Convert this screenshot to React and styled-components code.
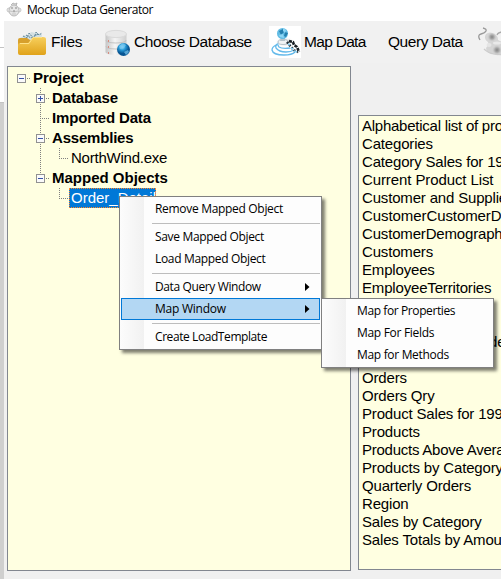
import React from 'react';
import styled, { createGlobalStyle, css } from 'styled-components';

const Global = createGlobalStyle`
  * { box-sizing: border-box; }
  html, body { margin: 0; overflow: hidden; }
  body { font-family: "Liberation Sans", Arial, sans-serif; color: #000; background: #f0f0f0; }
`;

const Screen = styled.div`
  position: relative;
  display: flex;
  width: 501px;
  height: 579px;
  overflow: hidden;
  white-space: nowrap;
`;
const Backdrop = styled.div`
  flex: 0 0 4px;
  display: flex;
  flex-direction: column;
  background: #cfcfcf;
`;
const BackdropPane = styled.div`
  height: ${(p) => p.$h}px;
  background: #fff;
  border-bottom: 1px solid #c3c3c3;
`;
const Window = styled.div`
  flex: 0 0 497px;
  display: flex;
  flex-direction: column;
  background: #f0f0f0;
`;
const TitleBar = styled.header`
  display: flex;
  align-items: center;
  flex: 0 0 21px;
  margin-left: -4px;
  padding: 0 0 2px 6px;
  gap: 5px;
  background: #fff;
  font: 12px/18px "Open Sans", sans-serif;
  letter-spacing: -0.42px;
`;
const Toolbar = styled.nav`
  display: flex;
  align-items: center;
  flex: 0 0 42px;
  padding-left: 12px;
  background: #f1f1f1;
`;
const Tool = styled.div`
  display: flex;
  align-items: center;
  flex: 0 0 ${(p) => p.$w}px;
  gap: ${(p) => p.$gap ?? 3}px;
  font-size: 15.5px;
  line-height: 20px;
  letter-spacing: ${(p) => p.$ls ?? 0}px;
  svg { flex: none; }
`;
const Body = styled.main`
  display: flex;
  align-items: flex-start;
  padding: 3px 0 0 3px;
`;
const TreePanel = styled.section`
  flex: 0 0 344px;
  height: 505px;
  padding: 1px 0 0 9px;
  border: 1px solid #828790;
  background: #ffffe1;
`;
const TreeRow = styled.div`
  display: flex;
  height: 20px;
  font-size: 15px;
  line-height: 20px;
  font-weight: ${(p) => (p.$bold ? 700 : 400)};
`;
const TreeLabel = styled.span`
  letter-spacing: ${(p) => p.$ls ?? 0}px;
  padding: 0 2px;
  ${(p) => p.$selected && css`
    background: #0078d7;
    color: #fff;
    outline: 1px dotted #ff8728;
    outline-offset: -1px;
    width: 87px;
  `}
`;
const ListPanel = styled.section`
  flex: 0 0 160px;
  margin: 49px 0 0 7px;
  height: 455px;
  padding: 1px 0 0 3px;
  border: 1px solid #828790;
  background: #ffffe1;
  overflow: hidden;
`;
const ListRow = styled.div`
  height: 18px;
  font-size: 15px;
  line-height: 18px;
  letter-spacing: ${(p) => p.$ls ?? -0.17}px;
`;
const Menu = styled.div`
  position: absolute;
  left: ${(p) => p.$x}px;
  top: ${(p) => p.$y}px;
  width: ${(p) => p.$w}px;
  padding: 1px;
  border: 1px solid #808080;
  background: linear-gradient(90deg, #fcfcfc 0, #f1f1f1 24px, #fdfdfd 24px);
  box-shadow: 3px 3px 3px rgba(0, 0, 0, 0.5);
`;
const MenuItem = styled.div`
  display: flex;
  align-items: center;
  justify-content: space-between;
  height: 22px;
  padding: 0 9px 0 33px;
  font: 12px/20px "Open Sans", sans-serif;
  letter-spacing: ${(p) => p.$ls ?? 0}px;
  border: 1px solid ${(p) => (p.$active ? '#0078d7' : 'transparent')};
  background: ${(p) => (p.$active ? '#b3d7f3' : 'transparent')};
`;
const Separator = styled.div`
  height: 6px;
  margin-left: 31px;
  border-top: 3px solid transparent;
  background: linear-gradient(#bdbdbd, #bdbdbd) 0 0 / 100% 1px no-repeat padding-box;
`;

const MonkeyIcon = () => (
  <svg width="16" height="17" viewBox="0 0 16 17">
    <circle cx="3" cy="9" r="2" fill="#f2f2f2" stroke="#bbb" strokeWidth=".8" />
    <circle cx="13" cy="9" r="2" fill="#f2f2f2" stroke="#bbb" strokeWidth=".8" />
    <path d="M5 4 7 2l2 1 2-1-1 3" fill="#ddd" stroke="#aaa" strokeWidth=".8" />
    <ellipse cx="8" cy="9.5" rx="5" ry="5.5" fill="#e6e6e6" stroke="#aaa" strokeWidth=".8" />
    <path d="M4 10q4 2 8 0M6 13h4" stroke="#bbb" fill="none" strokeWidth=".8" />
    <path d="M5 7h2M9 7h2M7 10h2" stroke="#888" />
  </svg>
);
const FolderIcon = () => (
  <svg width="32" height="32" viewBox="0 0 32 32">
    <defs><linearGradient id="folder" x2="0" y2="1"><stop stopColor="#f7cf5d" /><stop offset="1" stopColor="#e0a21a" /></linearGradient></defs>
    <path d="M4 12 9 9l3 1 3-4 11 2-1 9H4z" fill="#d4e0e3" />
    <path d="m7 10 4 2 2-5 5 6 2-7 3 3 3-2M10 9l5 3 7-4" fill="none" stroke="#567f95" strokeDasharray="2 1" />
    <path d="M2 14q0-2 2-2h7l3 2 3 1h9v4H2z" fill="#d7a02c" />
    <path d="M4 17h8l5-6h10q3 0 3 2v14q0 2-3 2H4q-2 0-2-2V19q0-2 2-2" fill="url(#folder)" />
    <path d="M4 17.5h9l4-6h9" fill="none" stroke="#ffe287" />
  </svg>
);
const DatabaseIcon = () => (
  <svg width="32" height="32" viewBox="0 0 32 32">
    <defs>
      <linearGradient id="db"><stop stopColor="#c5c5c5" /><stop offset=".45" stopColor="#f5f5f5" /><stop offset="1" stopColor="#cfcfcf" /></linearGradient>
      <radialGradient id="globe" cx=".4" cy=".3"><stop stopColor="#a5e2ff" /><stop offset=".5" stopColor="#279bd8" /><stop offset="1" stopColor="#075593" /></radialGradient>
    </defs>
    <path d="M3.500 8v18c0 4 21 4 21 0V8z" fill="url(#db)" />
    <ellipse cx="14" cy="8" rx="10.5" ry="3.600" fill="#e9e9e9" stroke="#dadada" />
    <path d="M4 14c0 4 20 4 20 0M4 20c0 4 20 4 20 0" stroke="#c4c4c4" fill="none" strokeWidth="1.1" />
    <path d="M6.500 14v2M6.500 20v2M6.500 26v2" stroke="#d98a7d" />
    <circle cx="21.500" cy="23.500" r="6.500" fill="url(#globe)" />
    <path d="m17 20 4-3 3 2-2 3-4 1zm5 6 4-2 1 2-3 3z" fill="#77c8ef" opacity=".7" />
  </svg>
);
const MapIcon = () => (
  <svg width="32" height="32" viewBox="0 0 32 32">
    <defs>
      <radialGradient id="mapShade"><stop stopColor="#8b9195" /><stop offset="1" stopColor="#fff" stopOpacity="0" /></radialGradient>
    </defs>
    <path d="M0 0h32v32H0z" fill="#fff" />
    <ellipse cx="16" cy="16" rx="10" ry="5" fill="url(#mapShade)" />
    <g fill="none" stroke="#62b9ea" strokeWidth="1.3">
      <path d="M7 19q-4 2-4 5 1 5 12 5 8 0 11-3" />
      <path d="M8 18q-2 2-1 4 3 4 10 4 5 0 8-2" />
      <path d="M9 17q-1 2 1 4 3 2 11 1" />
    </g>
    <ellipse cx="14" cy="16" rx="5" ry="2.500" fill="#f1f4f5" stroke="#a9b7bf" strokeWidth=".8" />
    <path d="m20 15 4 1 1 3 3 2 2 5" fill="none" stroke="#171d22" strokeWidth="2.6" strokeDasharray="3 1" />
    <path d="m18 16 4 5 4 4 3 1" fill="none" stroke="#26333a" strokeWidth="2.5" strokeDasharray="2 1.5" />
    <path d="m19 18 2 1m1 3 2 1m1 2 3 1" stroke="#86cff4" strokeWidth="1.8" />
    <path d="M12 12h4v3h-5z" fill="#b6c3ca" />
    <ellipse cx="13.500" cy="7.500" rx="5.500" ry="5.500" fill="#62bce4" />
    <path d="m10 5 4-2 1 3-3 3zm6 1 3 1-2 4-2-1z" fill="#247fae" />
    <path d="m14 2 3 2-1 3-2-2zm-4 7 4-1 1 4-4-1z" fill="#8dd6f5" />
  </svg>
);
const CellsIcon = () => (
  <svg width="28" height="34" viewBox="0 0 28 34">
    <defs>
      <radialGradient id="cell"><stop stopColor="#848484" /><stop offset=".45" stopColor="#aaa" /><stop offset="1" stopColor="#d0d0d0" stopOpacity="0" /></radialGradient>
      <filter id="cellShade" x="-20%" y="-20%" width="140%" height="140%"><feGaussianBlur stdDeviation=".6" /></filter>
    </defs>
    <g filter="url(#cellShade)">
      <path d="M2 15Q-1 10 3 9t5-3-3-3" fill="none" stroke="#999" strokeWidth="1.300" />
      <path d="M19 10q1-3 7-3" fill="none" stroke="#aaa" strokeWidth="1.300" />
      <path d="M8 9q4-3 8 0 4 1 4 6l6 3v10q-5 4-11 1-7-1-7-6 3-3 2-6-5-3-2-8" fill="#d5d5d5" />
      <path d="M6 24q4 4 10 5l9 1" fill="none" stroke="#ccc" strokeWidth="1.200" />
      <ellipse cx="19" cy="18" rx="4" ry="1.500" fill="#e9e9e9" />
      <ellipse cx="11" cy="20" rx="2.500" ry="2" fill="#e5e5e5" />
      <circle cx="14" cy="12" r="4.800" fill="url(#cell)" />
      <circle cx="19" cy="25" r="5" fill="url(#cell)" />
    </g>
  </svg>
);
const Arrow = () => <svg width="5" height="8" viewBox="0 0 5 8"><path d="M0 0v8l4.500-4z" /></svg>;

/* Connector and expand box that precede a tree label. */
const Branch = ({ w, cx, box, up, down, trunk }) => (
  <svg width={w} height="20" viewBox={`0 0 ${w} 20`} shapeRendering="crispEdges">
    <g stroke="#808080" strokeDasharray="1 1">
      {trunk && <path d="M23.5 0V20" />}
      {up && <path d={`M${cx + 0.5} 0V10`} />}
      {down && <path d={`M${cx + 0.5} 10V20`} />}
      <path d={`M${cx} 10.5H${w - 1}`} />
    </g>
    {box && (
      <g>
        <rect x={cx - 3.5} y="6.5" width="8" height="8" fill="#fafafa" stroke="#919191" />
        <path d={`M${cx - 2} 10.5h5`} stroke="#3550a5" />
        {box === '+' && <path d={`M${cx + 0.5} 8v5`} stroke="#3550a5" />}
      </g>
    )}
  </svg>
);

const tree = [
  { label: 'Project', bold: true, w: 14, cx: 4, box: '-' },
  { label: 'Database', bold: true, w: 33, cx: 23, box: '+', up: true, down: true, ls: -0.1 },
  { label: 'Imported Data', bold: true, w: 33, cx: 23, up: true, down: true, ls: -0.15 },
  { label: 'Assemblies', bold: true, w: 33, cx: 23, box: '-', up: true, down: true, ls: -0.2 },
  { label: 'NorthWind.exe', w: 52, cx: 42, up: true, trunk: true, ls: -0.23 },
  { label: 'Mapped Objects', bold: true, w: 33, cx: 23, box: '-', up: true },
  { label: 'Order_Detail', w: 52, cx: 42, up: true, selected: true },
];
const list = [
  'Alphabetical list of products', 'Categories', 'Category Sales for 1997', 'Current Product List',
  'Customer and Suppliers by City', 'CustomerCustomerDemo', 'CustomerDemographics', 'Customers',
  'Employees', 'EmployeeTerritories', 'Invoices', 'Order Details', 'Order Details Extended',
  'Order Subtotals', 'Orders', 'Orders Qry', 'Product Sales for 1997', 'Products',
  'Products Above Average Price', 'Products by Category', 'Quarterly Orders', 'Region',
  'Sales by Category', 'Sales Totals by Amount',
];
const tracking = {
  'Alphabetical list of products': -0.25,
  'Products Above Average Price': -0.25,
  'CustomerCustomerDemo': -0.08,
  'Current Product List': -0.1,
  'Order Details Extended': -0.2,
};

export default function App() {
  return (
    <Screen>
      <Global />
      <Backdrop><BackdropPane $h={48} /><BackdropPane $h={55} /></Backdrop>
      <Window>
        <TitleBar><MonkeyIcon />Mockup Data Generator</TitleBar>
        <Toolbar>
          <Tool $w={86} $ls={-0.3}><FolderIcon />Files</Tool>
          <Tool $w={167} $gap={0} $ls={-0.42}><DatabaseIcon />Choose Database</Tool>
          <Tool $w={119} $ls={-0.7}><MapIcon />Map Data</Tool>
          <Tool $w={90} $ls={-0.45}>Query Data</Tool>
          <Tool $w={28}><CellsIcon /></Tool>
        </Toolbar>
        <Body>
          <TreePanel>
            {tree.map((t) => (
              <TreeRow key={t.label} $bold={t.bold}>
                <Branch {...t} />
                <TreeLabel $selected={t.selected} $ls={t.ls}>{t.label}</TreeLabel>
              </TreeRow>
            ))}
          </TreePanel>
          <ListPanel>{list.map((t) => <ListRow key={t} $ls={tracking[t]}>{t}</ListRow>)}</ListPanel>
        </Body>
      </Window>
      <Menu $x={119} $y={196} $w={203}>
        <MenuItem $ls={-0.31}>Remove Mapped Object</MenuItem>
        <Separator />
        <MenuItem $ls={-0.33}>Save Mapped Object</MenuItem>
        <MenuItem $ls={-0.33}>Load Mapped Object</MenuItem>
        <Separator />
        <MenuItem $ls={-0.38}>Data Query Window<Arrow /></MenuItem>
        <MenuItem $ls={-0.25} $active>Map Window<Arrow /></MenuItem>
        <Separator />
        <MenuItem $ls={-0.42}>Create LoadTemplate</MenuItem>
      </Menu>
      <Menu $x={321} $y={298} $w={173}>
        <MenuItem $ls={-0.4}>Map for Properties</MenuItem>
        <MenuItem $ls={-0.3}>Map For Fields</MenuItem>
        <MenuItem $ls={-0.32}>Map for Methods</MenuItem>
      </Menu>
    </Screen>
  );
}
